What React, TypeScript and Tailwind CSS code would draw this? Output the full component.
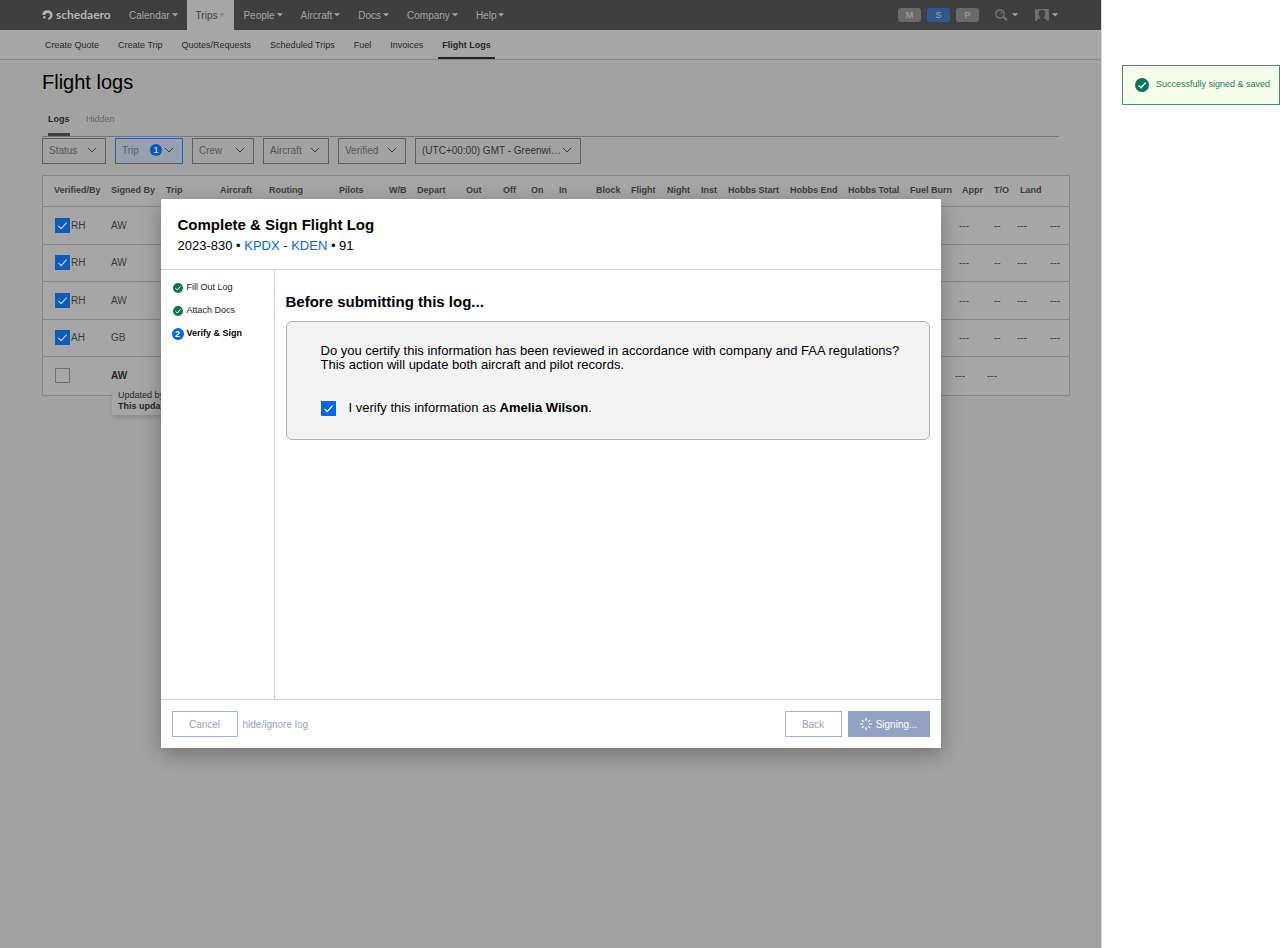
import { useState } from 'react';
import type { ReactNode } from 'react';

const NAV_ITEMS = ['Calendar', 'Trips', 'People', 'Aircraft', 'Docs', 'Company', 'Help'];

const SUB_NAV_ITEMS = [
  'Create Quote',
  'Create Trip',
  'Quotes/Requests',
  'Scheduled Trips',
  'Fuel',
  'Invoices',
  'Flight Logs',
];

const FILTERS = [
  { label: 'Status', width: 'w-[64px]' },
  { label: 'Trip', width: 'w-[68px]', count: 1 },
  { label: 'Crew', width: 'w-[62px]' },
  { label: 'Aircraft', width: 'w-[66px]' },
  { label: 'Verified', width: 'w-[68px]' },
];

const COLUMNS = [
  { label: 'Verified/By', width: 'w-[68px]', pad: 'pl-[11px]' },
  { label: 'Signed By', width: 'w-[55px]' },
  { label: 'Trip', width: 'w-[54px]' },
  { label: 'Aircraft', width: 'w-[49px]' },
  { label: 'Routing', width: 'w-[70px]' },
  { label: 'Pilots', width: 'w-[50px]' },
  { label: 'W/B', width: 'w-[28px]' },
  { label: 'Depart', width: 'w-[49px]' },
  { label: 'Out', width: 'w-[37px]' },
  { label: 'Off', width: 'w-[28px]' },
  { label: 'On', width: 'w-[28px]' },
  { label: 'In', width: 'w-[37px]' },
  { label: 'Block', width: 'w-[35px]' },
  { label: 'Flight', width: 'w-[36px]' },
  { label: 'Night', width: 'w-[34px]' },
  { label: 'Inst', width: 'w-[27px]' },
  { label: 'Hobbs Start', width: 'w-[62px]' },
  { label: 'Hobbs End', width: 'w-[58px]' },
  { label: 'Hobbs Total', width: 'w-[62px]' },
  { label: 'Fuel Burn', width: 'w-[45px]' },
  { label: 'Appr', width: 'w-[32px]', pad: 'pl-[7px]' },
  { label: 'T/O', width: 'w-[30px]', pad: 'pl-[7px]' },
  { label: 'Land', width: 'w-[30px]', pad: 'pl-[3px]' },
  { label: '', width: '' },
];

const LOGS = [
  { id: 1, verifiedBy: 'RH', signedBy: 'AW' },
  { id: 2, verifiedBy: 'RH', signedBy: 'AW' },
  { id: 3, verifiedBy: 'RH', signedBy: 'AW' },
  { id: 4, verifiedBy: 'AH', signedBy: 'GB' },
  { id: 5, verifiedBy: '', signedBy: 'AW' },
];

function Caret({ className = '' }: { className?: string }) {
  return (
    <svg viewBox="0 0 6 4" className={`h-1 w-1.5 ${className}`} fill="currentColor" aria-hidden="true">
      <path d="M0 0.3h6L3 3.6z" />
    </svg>
  );
}

function Chevron() {
  return (
    <svg
      viewBox="0 0 10 6"
      className="pointer-events-none absolute right-[9px] top-[10px] h-1.5 w-2.5"
      fill="none"
      stroke="#3f3f3f"
      aria-hidden="true"
    >
      <path d="M0.8 0.8 5 5 9.2 0.8" />
    </svg>
  );
}

function CheckCircle({ className }: { className: string }) {
  return (
    <svg viewBox="0 0 14 14" className={`shrink-0 ${className}`} aria-hidden="true">
      <circle cx="7" cy="7" r="7" fill="#0f7355" />
      <path d="M3.6 7.4 6 9.8 10.6 4.6" fill="none" stroke="#fff" strokeWidth="1.4" />
    </svg>
  );
}

function CheckBox({ id, label, checked, onChange, dim }: {
  id: string;
  label: string;
  checked: boolean;
  onChange: () => void;
  dim?: boolean;
}) {
  return (
    <span className="relative block size-[15px] shrink-0">
      <input
        id={id}
        type="checkbox"
        aria-label={label}
        checked={checked}
        onChange={onChange}
        className={`block size-[15px] appearance-none border ${
          dim
            ? 'border-[#6e6e6e] checked:border-[#0d5cb8] checked:bg-[#0d5cb8]'
            : 'border-[#8a8a8a] checked:border-[#0868e0] checked:bg-[#0868e0]'
        }`}
      />
      {checked && (
        <svg
          viewBox="0 0 15 15"
          className="pointer-events-none absolute inset-0"
          fill="none"
          stroke={dim ? '#c4d3e6' : '#fff'}
          strokeWidth="1.2"
          aria-hidden="true"
        >
          <path d="M3.4 7.8 6.2 10.6 11.6 4.6" />
        </svg>
      )}
    </span>
  );
}

function Logo() {
  return (
    <a href="#" className="flex w-[78px] items-center gap-[3px] text-[#b4b4b4]">
      <svg viewBox="0 0 11 10" className="h-2.5 w-[11px] shrink-0" aria-hidden="true">
        <path
          d="M0.2 4.4C0.6 1.8 2.8 0.2 5.5 0.2c3 0 5.1 2 5.1 4.7 0 2.4-1.6 4.3-4 4.9l-1-1.4c1.5-.5 2.5-1.7 2.5-3.2C8.1 3.7 7 2.9 5.7 2.9 4.2 2.9 3.6 4.5 2.2 4.9 1.3 5.1.5 4.9.2 4.400z"
          fill="currentColor"
        />
        <circle cx="2.3" cy="7.2" r="1.3" fill="currentColor" />
      </svg>
      <span className="font-[Lato,sans-serif] text-[12px] leading-3 font-bold">schedaero</span>
    </a>
  );
}

function TopNav() {
  return (
    <header className="flex h-[30px] items-stretch bg-[#3f3f3f] pl-[42px] pr-[43px] text-[10px] text-[#a6a6a6]">
      <Logo />
      <nav className="flex flex-1 items-stretch">
        {NAV_ITEMS.map((item) => (
          <a
            key={item}
            href="#"
            className={`flex items-center gap-[2px] px-[9px] ${item === 'Trips' ? 'bg-[#a6a6a6] text-[#3f3f3f]' : ''}`}
          >
            {item}
            <Caret className={item === 'Trips' ? 'text-[#858585]' : ''} />
          </a>
        ))}
      </nav>
      <div className="flex items-center gap-1.5">
        <button className="h-3.5 w-[23px] rounded-[3px] bg-[#6b6b6b] text-[9px] leading-[14px] text-[#a6a6a6]">M</button>
        <button className="h-3.5 w-[23px] rounded-[3px] bg-[#30588f] text-[9px] leading-[14px] text-[#a6a6a6]">S</button>
        <button className="h-3.5 w-[23px] rounded-[3px] bg-[#6b6b6b] text-[9px] leading-[14px] text-[#a6a6a6]">P</button>
      </div>
      <button aria-label="Search" className="ml-4 flex items-center gap-1">
        <svg viewBox="0 0 13 12" className="h-3 w-[13px]" fill="none" stroke="#7a7a7a" aria-hidden="true">
          <circle cx="5" cy="5" r="4.2" strokeWidth="1.2" />
          <path d="M8.2 7.7 12 11" strokeWidth="2" />
          <path d="M5 2.8a2.2 2.2 0 0 1 2 2.2" strokeWidth="0.8" />
        </svg>
        <Caret />
      </button>
      <button aria-label="Account" className="ml-[17px] flex items-center gap-[3px]">
        <svg viewBox="0 0 14 12" className="h-3 w-3.5" aria-hidden="true">
          <rect width="14" height="12" rx="1" fill="#6f6f6f" />
          <path
            d="M7 1c2.3 0 3.4 1.5 3.3 3.4 0 1.6-.6 2.9-1.5 3.6v1.2L12 10.800V12H2v-1.2l3.2-1.6V8C4.3 7.3 3.7 6 3.7 4.4 3.6 2.5 4.7 1 7 1z"
            fill="#3f3f3f"
          />
        </svg>
        <Caret />
      </button>
    </header>
  );
}

function SubNav() {
  return (
    <nav className="flex h-[30px] items-stretch gap-[11px] border-b border-[#868686] bg-[#a6a6a6] pl-[41px] text-[9px] text-[#262626]">
      {SUB_NAV_ITEMS.map((item) => (
        <a
          key={item}
          href="#"
          className={`flex items-center border-b-2 px-1 pt-1 ${
            item === 'Flight Logs' ? 'border-[#1f2423] font-bold' : 'border-transparent'
          }`}
        >
          {item}
        </a>
      ))}
    </nav>
  );
}

function Filters() {
  return (
    <div className="flex flex-wrap gap-[9px]">
      {FILTERS.map((filter) => (
        <div key={filter.label} className={`relative ${filter.width}`}>
          <select
            aria-label={filter.label}
            className={`h-[26px] w-full appearance-none border px-1.5 text-[10px] ${
              filter.count ? 'border-[#2765ad] bg-[#95a1b0] text-[#5c5f63]' : 'border-[#5e5e5e] text-[#555]'
            }`}
          >
            <option>{filter.label}</option>
          </select>
          {filter.count && (
            <span className="pointer-events-none absolute right-[21px] top-[7px] size-3 rounded-full bg-[#0a58b5] text-center text-[9px] leading-3 font-bold text-[#b5c6dd]">
              {filter.count}
            </span>
          )}
          <Chevron />
        </div>
      ))}
      <div className="relative w-[166px]">
        <select
          aria-label="Time zone"
          className="h-[26px] w-full appearance-none border border-[#5e5e5e] px-1.5 text-[10px] text-[#333]"
        >
          <option>(UTC+00:00) GMT - Greenwi…</option>
        </select>
        <Chevron />
      </div>
    </div>
  );
}

function LogsTable() {
  const [verified, setVerified] = useState([1, 2, 3, 4]);

  function toggle(id: number) {
    setVerified(verified.includes(id) ? verified.filter((v) => v !== id) : [...verified, id]);
  }

  return (
    <div className="border border-[#868686] bg-[#a6a6a6]">
      <table className="w-full table-fixed border-separate border-spacing-0 text-left">
        <thead>
          <tr className="h-[31px] text-[9px] text-[#3b3b3b]">
            {COLUMNS.map((col) => (
              <th
                key={col.label}
                className={`border-b border-[#868686] p-0 font-bold whitespace-nowrap ${col.width} ${col.pad || ''}`}
              >
                {col.label}
              </th>
            ))}
          </tr>
        </thead>
        <tbody>
          {LOGS.map((log) => {
            const pending = !log.verifiedBy;
            const cell = pending ? 'p-0' : 'border-b border-[#868686] p-0';
            return (
              <tr key={log.id} className="text-[10px] text-[#3b3b3b] odd:h-[38px] even:h-[37px]">
                <td className={cell}>
                  <div className="flex items-center gap-[1px] pl-3">
                    <CheckBox
                      id={`log-${log.id}`}
                      label="Verified"
                      dim
                      checked={verified.includes(log.id)}
                      onChange={() => toggle(log.id)}
                    />
                    {log.verifiedBy}
                  </div>
                </td>
                <td className={cell}>
                  {pending ? (
                    <div className="relative font-bold text-[#262626]">
                      {log.signedBy}
                      <div className="absolute left-px top-[19px] bg-[#a6a6a6] px-1.5 py-[3px] text-[9px] leading-[11px] font-normal whitespace-nowrap shadow-md">
                        <p>Updated by</p>
                        <p className="font-bold">This update</p>
                      </div>
                    </div>
                  ) : (
                    log.signedBy
                  )}
                </td>
                <td colSpan={18} className={cell} />
                <td className={cell}>
                  <span className={pending ? '' : 'pl-1'}>---</span>
                </td>
                <td className={cell}>
                  <span className={pending ? '' : 'pl-[7px]'}>{pending ? '---' : '--'}</span>
                </td>
                <td className={cell}>{pending ? '' : '---'}</td>
                <td className={cell}>
                  <span className="pl-[3px]">{pending ? '' : '---'}</span>
                </td>
              </tr>
            );
          })}
        </tbody>
      </table>
    </div>
  );
}

function Step({ icon, children, current }: { icon: ReactNode; children: ReactNode; current?: boolean }) {
  return (
    <li
      className={`flex h-[23px] items-center text-[9px] ${current ? 'font-bold text-black' : 'text-[#222]'}`}
      aria-current={current ? 'step' : undefined}
    >
      <span className="mr-[3px] flex w-3 justify-center">{icon}</span>
      {children}
    </li>
  );
}

function SignDialog() {
  const [certified, setCertified] = useState(true);

  return (
    <section
      role="dialog"
      aria-labelledby="dialog-title"
      className="relative w-full max-w-[780px] bg-white text-black shadow-[0_6px_20px_rgba(0,0,0,0.3)]"
    >
      <header className="border-b border-[#d0d0d0] px-[17px] pt-[17px] pb-[15px]">
        <h2 id="dialog-title" className="text-[15px] leading-[18px] font-bold">
          Complete &amp; Sign Flight Log
        </h2>
        <p className="pt-1 text-[13px] leading-4">
          2023-830 • <a href="#" className="text-[#0868e0]">KPDX</a> -{' '}
          <a href="#" className="text-[#0868e0]">KDEN</a> • 91
        </p>
      </header>

      <div className="flex min-h-[429px]">
        <ol className="w-[114px] shrink-0 border-r border-[#d0d0d0] pl-[11px] pt-1.5">
          <Step icon={<CheckCircle className="size-2.5" />}>Fill Out Log</Step>
          <Step icon={<CheckCircle className="size-2.5" />}>Attach Docs</Step>
          <Step
            current
            icon={
              <span className="size-3 rounded-full bg-[#0868e0] text-center text-[9px] leading-3 text-white">2</span>
            }
          >
            Verify &amp; Sign
          </Step>
        </ol>

        <div className="flex-1 px-[11px] pt-[22px]">
          <h3 className="text-[15px] leading-5 font-bold">Before submitting this log...</h3>
          <div className="mt-[9px] rounded-md border border-[#b0b0b0] bg-[#f3f3f3] pl-[34px] pr-4 pt-[22px] pb-[23px]">
            <p className="text-[13px] leading-[14px]">
              Do you certify this information has been reviewed in accordance with company and FAA regulations?
              <br />
              This action will update both aircraft and pilot records.
            </p>
            <div className="mt-7 flex items-center gap-[13px]">
              <CheckBox
                id="certify"
                label="I verify this information as Amelia Wilson."
                checked={certified}
                onChange={() => setCertified(!certified)}
              />
              <label htmlFor="certify" className="text-[13px] leading-4">
                I verify this information as <b>Amelia Wilson</b>.
              </label>
            </div>
          </div>
        </div>
      </div>

      <footer className="flex items-center border-t border-[#d0d0d0] px-[11px] py-[11px] text-[10px] text-[#92a3c4]">
        <button className="h-[26px] w-[66px] border border-[#a3b2d0]">Cancel</button>
        <a href="#" className="ml-[5px] flex-1">hide/ignore log</a>
        <button className="h-[26px] w-[57px] border border-[#a3b2d0]">Back</button>
        <button className="ml-1.5 flex h-[26px] w-[82px] items-center justify-center gap-1 bg-[#92a2c2] text-white">
          <svg viewBox="0 0 12 12" className="size-3" stroke="#fff" strokeWidth="1.2" aria-hidden="true">
            <path d="M6 0v3M6 9v3M0 6h3M9 6h3M1.8 1.8l2 2M8.2 8.2l2 2M1.8 10.2l2-2M8.2 3.8l2-2" />
          </svg>
          Signing...
        </button>
      </footer>
    </section>
  );
}

export default function App() {
  return (
    <div className="flex min-h-screen bg-white font-['Liberation_Sans',Arial,sans-serif]">
      <div className="relative min-w-0 flex-1 border-r border-[#d8d8d8] bg-[#a2a2a2]">
        <TopNav />
        <SubNav />
        <main className="pl-[42px] pt-[10px]">
          <div className="pr-[42px]">
            <h1 className="text-[20px] leading-6 text-black">Flight logs</h1>
            <div role="tablist" className="mt-[17px] flex gap-4 border-b border-[#777] pl-1.5 text-[9px]">
              <button role="tab" aria-selected="true" className="h-[25px] w-[22px] border-b-3 border-[#3f3f3f] pb-1 text-left font-bold text-[#262626]">
                Logs
              </button>
              <button role="tab" aria-selected="false" className="h-[25px] border-b-3 border-transparent pb-1 text-[#666]">
                Hidden
              </button>
            </div>
            <Filters />
          </div>
          <div className="pt-[11px] pr-[31px]">
            <LogsTable />
          </div>
        </main>

        <div className="absolute inset-x-0 top-[199px] flex justify-center">
          <SignDialog />
        </div>
      </div>

      <aside className="w-[178px] shrink-0 pl-5 pt-[65px]">
        <div
          role="status"
          className="flex h-10 items-center gap-[7px] border border-[#3f8f76] bg-[#f6fdea] pl-3 text-[9px] whitespace-nowrap text-[#1d7a5c]"
        >
          <CheckCircle className="size-3.5" />
          Successfully signed &amp; saved
        </div>
      </aside>
    </div>
  );
}
